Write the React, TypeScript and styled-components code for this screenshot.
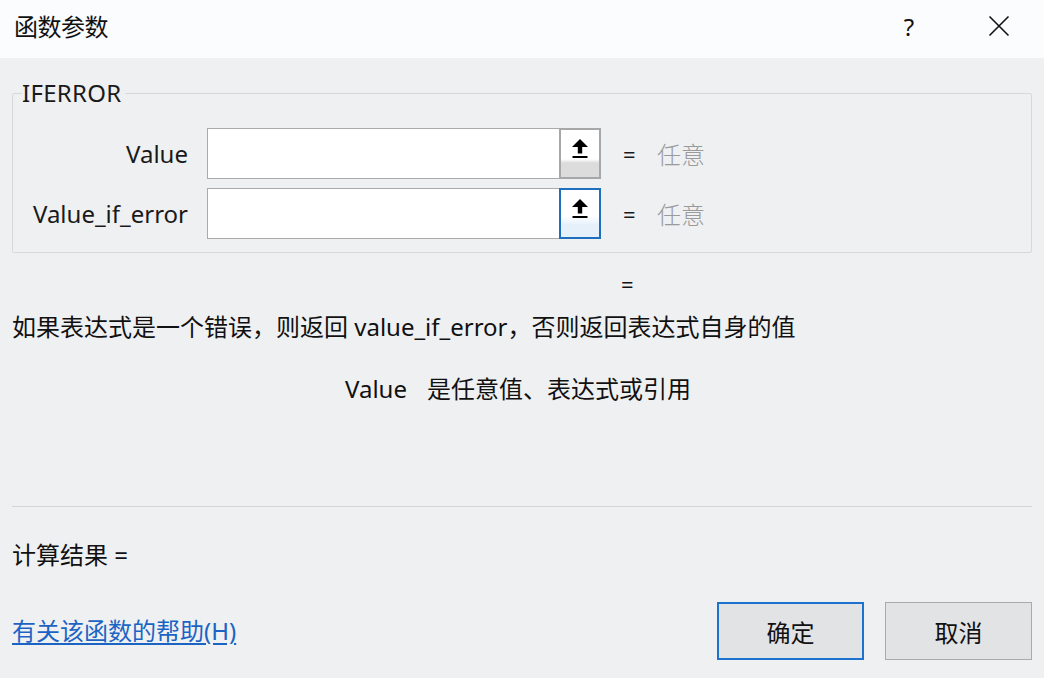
import React from "react";
import styled, { createGlobalStyle } from "styled-components";

const Global = createGlobalStyle`
  html, body { margin: 0; padding: 0; background: #eff0f2; }
  body { font-family: "Noto Sans", "Noto Sans CJK SC", sans-serif; color: #111; }
  * { box-sizing: border-box; }
`;

const Dialog = styled.div`
  width: 1044px;
  height: 678px;
  display: flex;
  flex-direction: column;
  background: #eff0f2;
  overflow: hidden;
`;

const TitleBar = styled.div`
  height: 58px;
  flex: none;
  background: #fbfcfe;
  display: flex;
  align-items: center;
  padding-left: 14px;
`;

const Title = styled.div`
  font-family: "Noto Sans CJK SC", sans-serif;
  font-size: 24px;
  line-height: 28px;
  margin-top: -6px;
  flex: 1;
  letter-spacing: -0.5px;
`;

const TitleButton = styled.div`
  width: 90px;
  height: 58px;
  display: flex;
  align-items: center;
  justify-content: center;
  padding-bottom: 6px;
  font-size: 24px;
  color: #111;
`;

const Body = styled.div`
  flex: 1;
  display: flex;
  flex-direction: column;
  padding: 21px 12px 0 12px;
`;

const Group = styled.fieldset`
  margin: 0;
  padding: 21px 0 11px 0;
  border: 1px solid #d7d8da;
  border-radius: 2px;
  height: 174px;
  display: flex;
  flex-direction: column;
  gap: 9px;
`;

const Legend = styled.legend`
  font-size: 24px;
  padding: 0 3px 0 0;
  margin-left: 9px;
  line-height: 28px;
  letter-spacing: 0.3px;
  color: #1a1a1a;
`;

const Row = styled.div`
  display: flex;
  align-items: center;
  height: 51px;
`;

const Label = styled.div`
  width: 175px;
  text-align: right;
  font-size: 24px;
  line-height: 28px;
  color: #1a1a1a;
`;

const Field = styled.div`
  margin-left: 19px;
  display: flex;
  height: 51px;
`;

const Input = styled.div`
  width: 352px;
  height: 51px;
  background: #fff;
  border: 1px solid #a9aaac;
  border-right: none;
`;

const RefButton = styled.div<{ $focused?: boolean }>`
  width: 42px;
  height: 51px;
  display: flex;
  align-items: flex-start;
  justify-content: center;
  padding-top: 8px;
  border: 2px solid ${(p) => (p.$focused ? "#1f6fbf" : "#a6a7a9")};
  background: ${(p) =>
    p.$focused
      ? "linear-gradient(#ffffff 0%, #ffffff 55%, #e5f0fb 75%, #e5f0fb 100%)"
      : "linear-gradient(#ffffff 0%, #ffffff 62%, #dcdcdc 70%, #dcdcdc 100%)"};
`;

const Eq = styled.div`
  margin-left: 22px;
  width: 34px;
  font-size: 22px;
  line-height: 28px;
  color: #1a1a1a;
`;

const AnyText = styled.div`
  font-family: "Noto Sans CJK SC", sans-serif;
  font-size: 24px;
  line-height: 28px;
  color: #9a9a9a;
  font-weight: 300;
`;

const ResultEq = styled.div`
  margin-top: 19px;
  padding-left: 609px;
  font-size: 22px;
  line-height: 24px;
`;

const Description = styled.div`
  margin-top: 17px;
  font-size: 24px;
  line-height: 28px;
  letter-spacing: 0px;
`;

const ArgHelp = styled.div`
  margin-top: 34px;
  padding-left: 333px;
  font-size: 24px;
  line-height: 28px;
  display: flex;
  gap: 20px;
`;

const Separator = styled.div`
  margin-top: 103px;
  height: 1px;
  background: #d4d5d7;
`;

const Result = styled.div`
  margin-top: 34px;
  font-size: 24px;
  line-height: 28px;
`;

const Footer = styled.div`
  margin-top: 33px;
  display: flex;
  align-items: center;
`;

const HelpLink = styled.a`
  flex: 1;
  font-size: 24px;
  line-height: 28px;
  color: #1c64c4;
  text-decoration: underline;
  text-underline-offset: 3px;
  cursor: pointer;
`;

const Button = styled.button<{ $primary?: boolean }>`
  width: 147px;
  height: 58px;
  margin-left: ${(p) => (p.$primary ? 0 : 21)}px;
  font-family: "Noto Sans CJK SC", sans-serif;
  font-size: 24px;
  color: #111;
  background: #e2e3e5;
  border: ${(p) => (p.$primary ? "2px solid #1d72d0" : "1px solid #a9aaac")};
  padding: 0;
`;

const UploadIcon = () => (
  <svg width="18" height="22" viewBox="0 0 18 22">
    <path d="M9 1 L17 9 L11.2 9 L11.2 15.5 L6.8 15.5 L6.8 9 L1 9 Z" fill="#000" />
    <rect x="1.5" y="18" width="15" height="2" fill="#000" />
  </svg>
);

const CloseIcon = () => (
  <svg width="22" height="22" viewBox="0 0 22 22">
    <path d="M1.5 1.5 L20.5 20.5 M20.5 1.5 L1.5 20.5" stroke="#111" strokeWidth="1.6" />
  </svg>
);

export default function App() {
  return (
    <>
      <Global />
      <Dialog>
        <TitleBar>
          <Title>函数参数</Title>
          <TitleButton>?</TitleButton>
          <TitleButton>
            <CloseIcon />
          </TitleButton>
        </TitleBar>
        <Body>
          <Group>
            <Legend>IFERROR</Legend>
            <Row>
              <Label>Value</Label>
              <Field>
                <Input />
                <RefButton>
                  <UploadIcon />
                </RefButton>
              </Field>
              <Eq>=</Eq>
              <AnyText>任意</AnyText>
            </Row>
            <Row>
              <Label>Value_if_error</Label>
              <Field>
                <Input />
                <RefButton $focused>
                  <UploadIcon />
                </RefButton>
              </Field>
              <Eq>=</Eq>
              <AnyText>任意</AnyText>
            </Row>
          </Group>
          <ResultEq>=</ResultEq>
          <Description>如果表达式是一个错误，则返回 value_if_error，否则返回表达式自身的值</Description>
          <ArgHelp>
            <span>Value</span>
            <span>是任意值、表达式或引用</span>
          </ArgHelp>
          <Separator />
          <Result>计算结果 =</Result>
          <Footer>
            <HelpLink>有关该函数的帮助(H)</HelpLink>
            <Button $primary>确定</Button>
            <Button>取消</Button>
          </Footer>
        </Body>
      </Dialog>
    </>
  );
}
